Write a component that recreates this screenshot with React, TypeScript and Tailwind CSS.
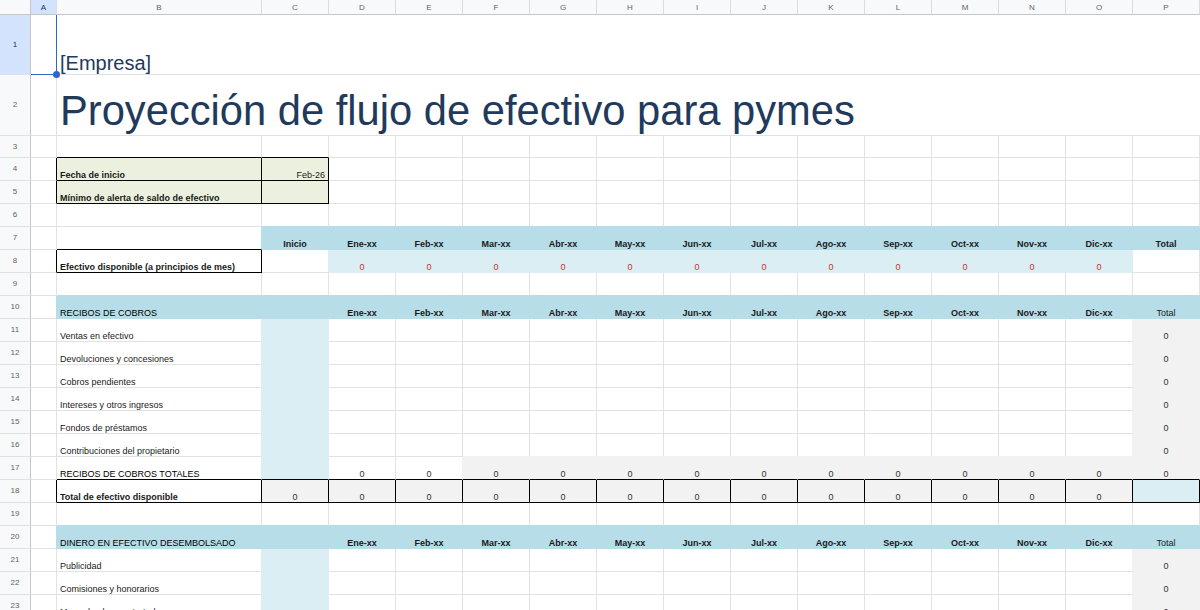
import React from 'react';

type Fill = 'none' | 'blue' | 'light' | 'gray' | 'green';
type Cell = {
  t?: string;
  fill?: Fill;
  box?: boolean;
  align?: 'l' | 'c' | 'r';
  bold?: boolean;
  red?: boolean;
  caps?: boolean;
};

const COLS = ['A', 'B', 'C', 'D', 'E', 'F', 'G', 'H', 'I', 'J', 'K', 'L', 'M', 'N', 'O', 'P'];
const COLW = [
  'w-[26px]', 'w-[205px]', 'w-[67px]', 'w-[67px]', 'w-[67px]', 'w-[67px]', 'w-[67px]', 'w-[67px]',
  'w-[67px]', 'w-[67px]', 'w-[67px]', 'w-[67px]', 'w-[67px]', 'w-[67px]', 'w-[67px]', 'w-[67px]',
];
const MONTHS = ['Ene-xx', 'Feb-xx', 'Mar-xx', 'Abr-xx', 'May-xx', 'Jun-xx', 'Jul-xx', 'Ago-xx', 'Sep-xx', 'Oct-xx', 'Nov-xx', 'Dic-xx'];

const BG: Record<Fill, string> = {
  none: 'bg-white',
  blue: 'bg-[#b7dde8]',
  light: 'bg-[#daeef3]',
  gray: 'bg-[#f2f2f2]',
  green: 'bg-[#ebf1de]',
};
type BKey = 'grid' | 'black' | Fill;
const RB: Record<BKey, string> = {
  grid: 'border-r-[#e2e2e2]',
  black: 'border-r-black',
  none: 'border-r-[#e2e2e2]',
  blue: 'border-r-[#b7dde8]',
  light: 'border-r-[#daeef3]',
  gray: 'border-r-[#f2f2f2]',
  green: 'border-r-[#ebf1de]',
};
const BB: Record<BKey, string> = {
  grid: 'border-b-[#e2e2e2]',
  black: 'border-b-black',
  none: 'border-b-[#e2e2e2]',
  blue: 'border-b-[#b7dde8]',
  light: 'border-b-[#daeef3]',
  gray: 'border-b-[#f2f2f2]',
  green: 'border-b-[#ebf1de]',
};

const empty = (): Cell[] => COLS.map(() => ({}));

function buildGrid(): Cell[][] {
  const g: Cell[][] = [];
  for (let r = 0; r <= 23; r++) g.push(empty());
  g[4][1] = { t: 'Fecha de inicio', bold: true, fill: 'green', box: true };
  g[4][2] = { t: 'Feb-26', align: 'r', fill: 'green', box: true };
  g[5][1] = { t: 'Mínimo de alerta de saldo de efectivo', bold: true, fill: 'green', box: true };
  g[5][2] = { fill: 'green', box: true };
  g[7][2] = { t: 'Inicio', bold: true, align: 'c', fill: 'blue' };
  MONTHS.forEach((m, i) => (g[7][3 + i] = { t: m, bold: true, align: 'c', fill: 'blue' }));
  g[7][15] = { t: 'Total', bold: true, align: 'c', fill: 'blue' };
  g[8][1] = { t: 'Efectivo disponible (a principios de mes)', bold: true, box: true };
  MONTHS.forEach((_, i) => (g[8][3 + i] = { t: '0', align: 'c', fill: 'light', red: true }));
  const section = (r: number, title: string) => {
    g[r][1] = { t: title, fill: 'blue', caps: true };
    g[r][2] = { fill: 'blue' };
    MONTHS.forEach((m, i) => (g[r][3 + i] = { t: m, bold: true, align: 'c', fill: 'blue' }));
    g[r][15] = { t: 'Total', align: 'c', fill: 'blue' };
  };
  section(10, 'RECIBOS DE COBROS');
  const items = (r: number, label: string) => {
    g[r][1] = { t: label };
    g[r][2] = { fill: 'light' };
    g[r][15] = { t: '0', align: 'c', fill: 'gray' };
  };
  ['Ventas en efectivo', 'Devoluciones y concesiones', 'Cobros pendientes', 'Intereses y otros ingresos', 'Fondos de préstamos', 'Contribuciones del propietario'].forEach(
    (l, i) => items(11 + i, l)
  );
  g[17][1] = { t: 'RECIBOS DE COBROS TOTALES', caps: true };
  g[17][2] = { fill: 'light' };
  g[17][3] = { t: '0', align: 'c' };
  g[17][4] = { t: '0', align: 'c' };
  for (let c = 5; c <= 15; c++) g[17][c] = { t: '0', align: 'c', fill: 'gray' };
  g[18][1] = { t: 'Total de efectivo disponible', bold: true, box: true };
  for (let c = 2; c <= 14; c++) g[18][c] = { t: '0', align: 'c', fill: 'gray', box: true };
  g[18][15] = { fill: 'light', box: true };
  section(20, 'DINERO EN EFECTIVO DESEMBOLSADO');
  ['Publicidad', 'Comisiones y honorarios', 'Mano de obra contratada'].forEach((l, i) => items(21 + i, l));
  return g;
}

const GRID = buildGrid();

const rowH = (r: number) => (r === 1 ? 'h-[60px]' : r === 2 ? 'h-[61px]' : r === 3 ? 'h-[22px]' : 'h-[23px]');

function rightKey(r: number, c: number): BKey {
  const cell = GRID[r][c];
  const next = c + 1 < COLS.length ? GRID[r][c + 1] : undefined;
  if (cell.box || next?.box) return 'black';
  if (cell.fill && cell.fill !== 'none') return cell.fill;
  if (next?.fill && next.fill !== 'none') return next.fill;
  return 'grid';
}
function bottomKey(r: number, c: number): BKey {
  const cell = GRID[r][c];
  const below = r + 1 <= 23 ? GRID[r + 1][c] : undefined;
  if (cell.box || below?.box) return 'black';
  if (cell.fill && cell.fill !== 'none') return cell.fill;
  if (below?.fill && below.fill !== 'none') return below.fill;
  return 'grid';
}

function RowHeader({ r, sel }: { r: number; sel?: boolean }) {
  return (
    <div
      className={`${rowH(r)} w-[31px] shrink-0 border-r border-b border-r-[#c4c7c5] border-b-[#e2e2e2] flex items-center justify-center text-[8px] ${
        sel ? 'bg-[#d3e3fd] text-[#0b2e6b]' : 'bg-[#f8f9fa] text-[#5f6368]'
      }`}
    >
      {r}
    </div>
  );
}

function DataCell({ r, c }: { r: number; c: number }) {
  const cell = GRID[r][c];
  const fill = cell.fill ?? 'none';
  const justify = cell.align === 'c' ? 'justify-center' : cell.align === 'r' ? 'justify-end' : 'justify-start';
  const color = cell.red
    ? 'text-[#c0392b]'
    : cell.t === '0'
    ? 'text-[#333]'
    : cell.caps
    ? 'text-black'
    : 'text-[#1a1a1a]';
  return (
    <div
      className={`${COLW[c]} shrink-0 border-r border-b ${RB[rightKey(r, c)]} ${BB[bottomKey(r, c)]} ${BG[fill]} flex items-end ${justify} px-[3px] pb-0 overflow-hidden whitespace-nowrap`}
    >
      {cell.t && (
        <span className={`text-[9px] leading-none ${color} ${cell.bold ? 'font-bold' : 'font-normal'}`}>{cell.t}</span>
      )}
    </div>
  );
}

export default function App() {
  const rows: number[] = [];
  for (let r = 3; r <= 23; r++) rows.push(r);
  return (
    <div className="w-[1200px] h-[610px] overflow-hidden bg-white font-['Liberation_Sans',Arial,sans-serif]">
      <div className="flex h-[15px]">
        <div className="w-[31px] shrink-0 bg-[#f8f9fa] border-r border-b border-r-[#c4c7c5] border-b-[#c4c7c5]" />
        {COLS.map((l, i) => (
          <div
            key={l}
            className={`${COLW[i]} shrink-0 border-r border-b border-r-[#dadce0] border-b-[#c4c7c5] flex items-center justify-center pt-[1px] text-[8px] ${
              i === 0 ? 'bg-[#d3e3fd] text-[#0b2e6b]' : 'bg-[#f8f9fa] text-[#5f6368]'
            }`}
          >
            {l}
          </div>
        ))}
      </div>
      <div className="flex">
        <RowHeader r={1} sel />
        <div className="relative w-[26px] h-[60px] shrink-0 border-r border-b border-r-[#2f67c7] border-b-[#2f67c7]">
          <div className="absolute -right-[4px] -bottom-[4px] w-[7px] h-[7px] rounded-full bg-[#2f67c7] z-10" />
        </div>
        <div className="w-[1143px] h-[60px] shrink-0 border-b border-b-[#e2e2e2] flex items-end px-[3px] pb-[1px] whitespace-nowrap">
          <span className="text-[20px] leading-none text-[#213a5c]">[Empresa]</span>
        </div>
      </div>
      <div className="flex">
        <RowHeader r={2} />
        <div className="w-[26px] h-[61px] shrink-0 border-r border-b border-r-[#e2e2e2] border-b-[#e2e2e2]" />
        <div className="w-[1143px] h-[61px] shrink-0 border-b border-b-[#e2e2e2] flex items-end px-[3px] pb-[3px] whitespace-nowrap">
          <span className="text-[41.7px] leading-none text-[#213a5c]">Proyección de flujo de efectivo para pymes</span>
        </div>
      </div>
      {rows.map((r) => (
        <div key={r} className={`flex ${rowH(r)}`}>
          <RowHeader r={r} />
          {COLS.map((_, c) => (
            <DataCell key={c} r={r} c={c} />
          ))}
        </div>
      ))}
    </div>
  );
}
